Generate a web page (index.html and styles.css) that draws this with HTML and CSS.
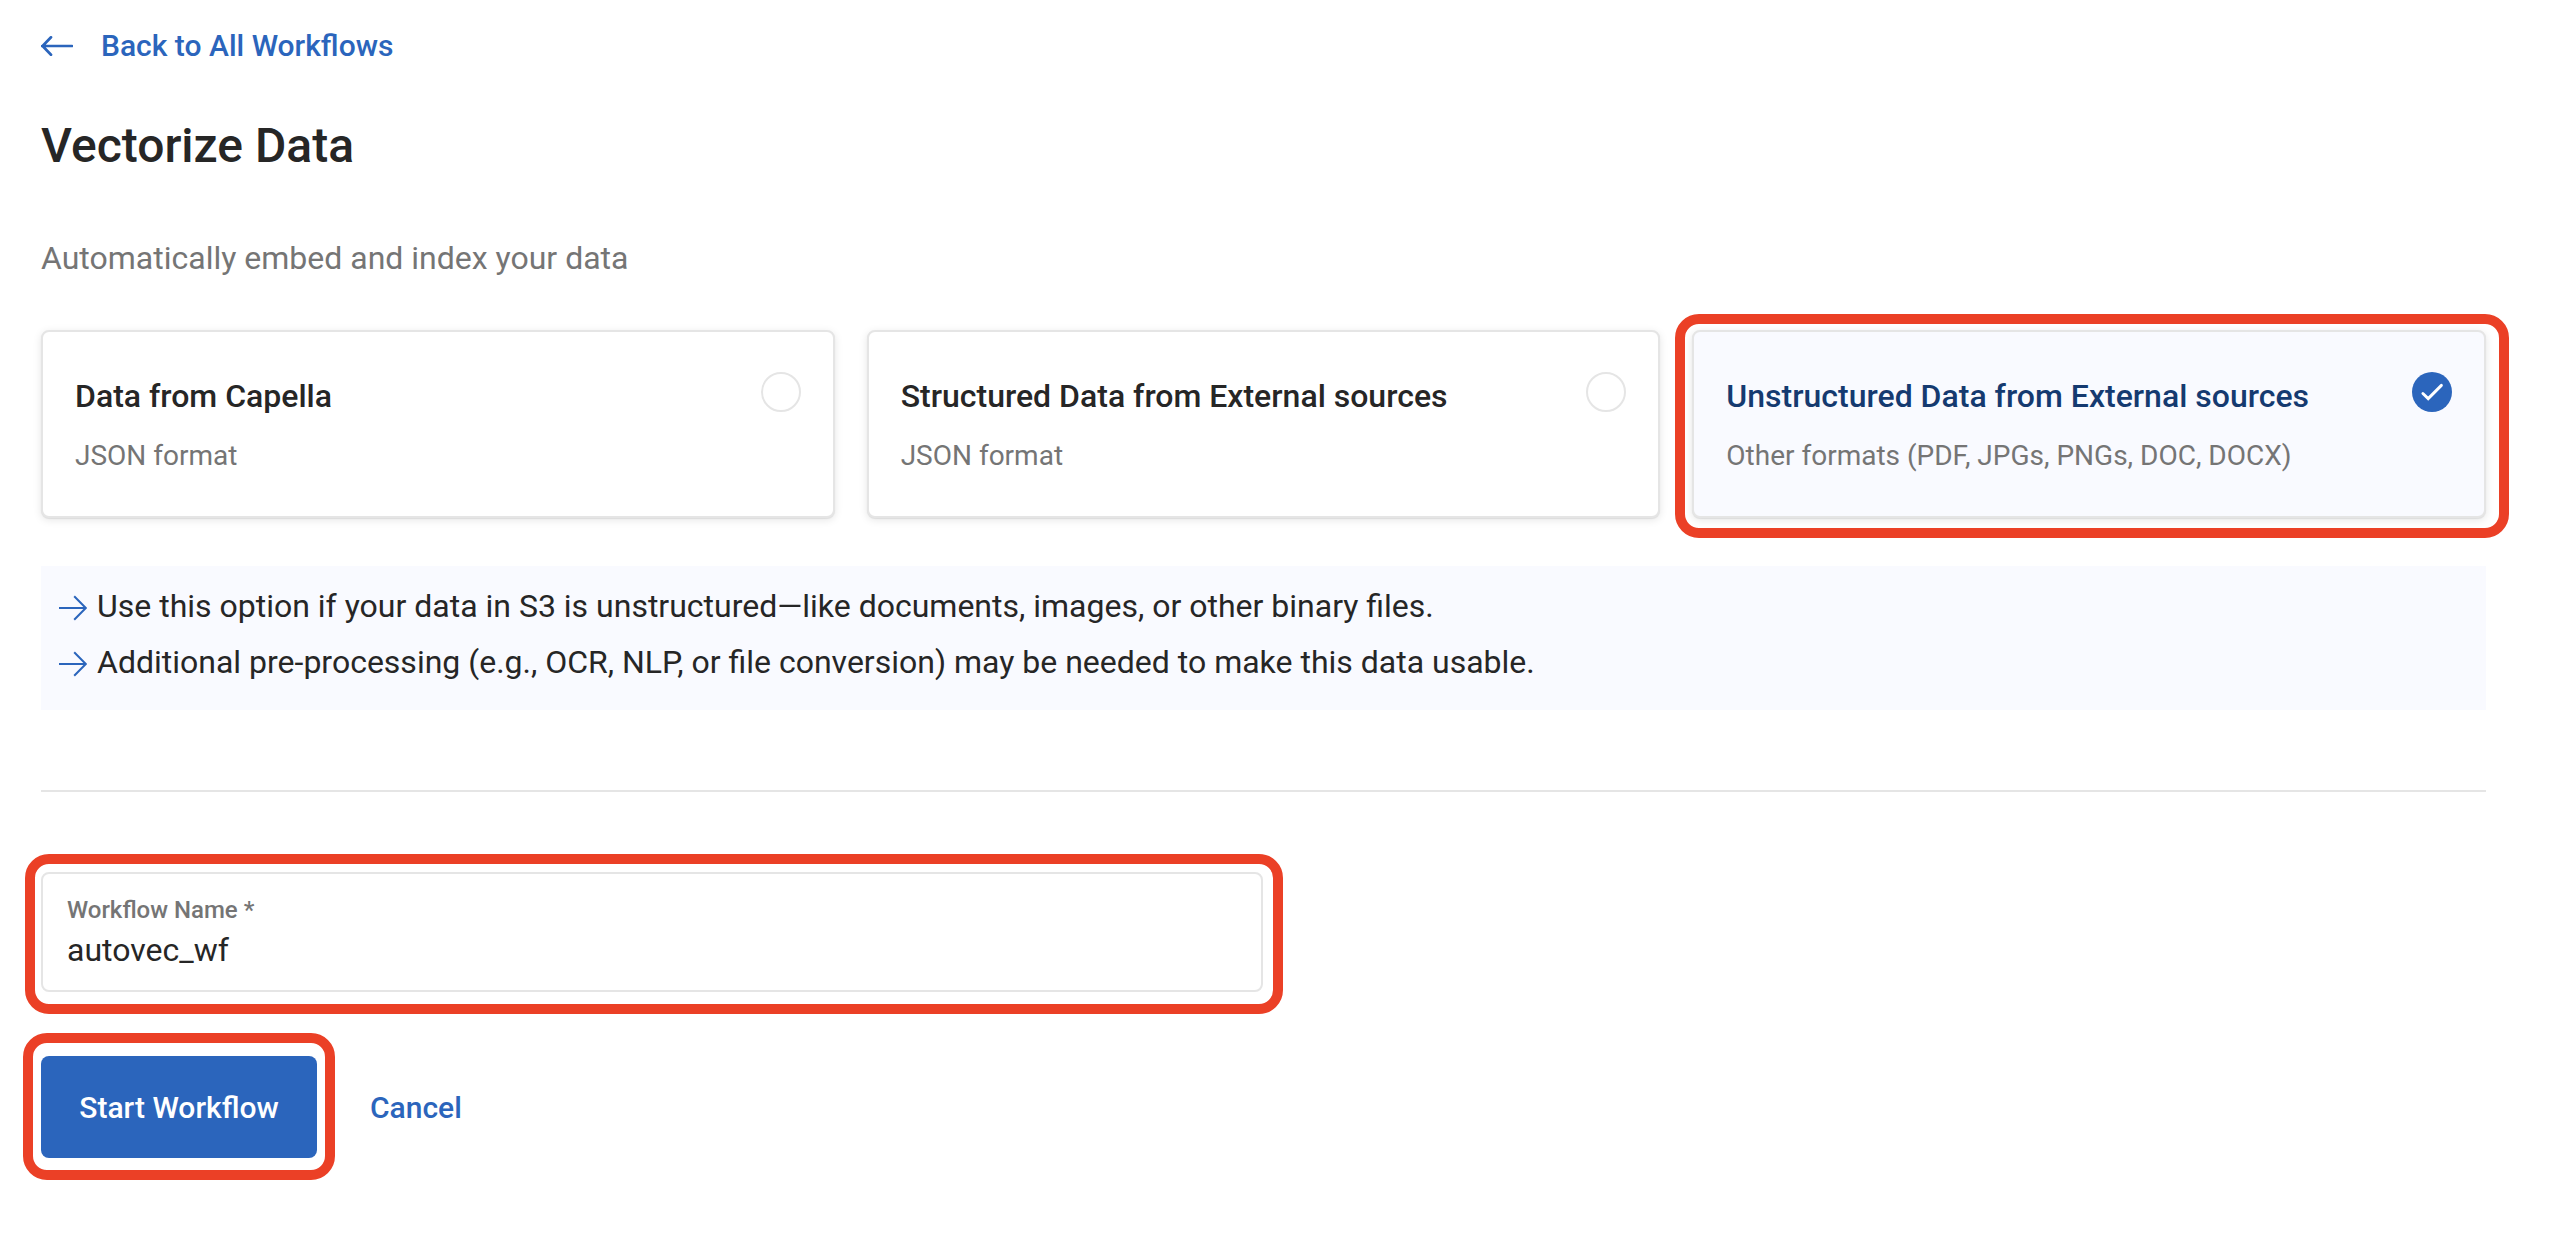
FILE: index.html
```
<!DOCTYPE html>
<html lang="en">
<head>
<meta charset="utf-8">
<title>Vectorize Data</title>
<link rel="stylesheet" href="styles.css">
</head>
<body>
<main class="page">
  <a class="back" href="#">
    <svg class="back-icon" width="32" height="20" viewBox="0 0 32 20" fill="none"><path d="M31 10H1M10 1.3 1.6 10l8.4 8.7" stroke="currentColor" stroke-width="2.7" stroke-linecap="round" stroke-linejoin="round"/></svg>
    <span>Back to All Workflows</span>
  </a>
  <h1 class="title">Vectorize Data</h1>
  <p class="subtitle">Automatically embed and index your data</p>

  <section class="cards">
    <article class="card">
      <div class="card-body">
        <h2 class="card-title">Data from Capella</h2>
        <p class="card-text">JSON format</p>
      </div>
      <span class="radio"></span>
    </article>
    <article class="card">
      <div class="card-body">
        <h2 class="card-title">Structured Data from External sources</h2>
        <p class="card-text">JSON format</p>
      </div>
      <span class="radio"></span>
    </article>
    <article class="card card-selected">
      <div class="card-body">
        <h2 class="card-title">Unstructured Data from External sources</h2>
        <p class="card-text">Other formats (PDF, JPGs, PNGs, DOC, DOCX)</p>
      </div>
      <svg class="check" width="40" height="40" viewBox="0 0 40 40" fill="none"><circle cx="20" cy="20" r="20" fill="#2b65bc"/><path d="M10.9 21.5 16.2 26.6 29.4 13.4" stroke="#fff" stroke-width="2.9" stroke-linecap="round" stroke-linejoin="miter"/></svg>
      <span class="ring ring-card"></span>
    </article>
  </section>

  <ul class="info">
    <li class="info-item"><svg class="info-icon" width="28" height="26" viewBox="0 0 28 26" fill="none"><path d="M0 13H26.5M15.2 1.2 26.8 13 15.2 24.8" stroke="currentColor" stroke-width="2"/></svg>Use this option if your data in S3 is unstructured—like documents, images, or other binary files.</li>
    <li class="info-item"><svg class="info-icon" width="28" height="26" viewBox="0 0 28 26" fill="none"><path d="M0 13H26.5M15.2 1.2 26.8 13 15.2 24.8" stroke="currentColor" stroke-width="2"/></svg>Additional pre-processing (e.g., OCR, NLP, or file conversion) may be needed to make this data usable.</li>
  </ul>

  <hr class="divider">

  <div class="field">
    <label class="field-label" for="workflow-name">Workflow Name *</label>
    <input class="field-input" id="workflow-name" type="text" value="autovec_wf" spellcheck="false">
    <span class="ring ring-field"></span>
  </div>

  <div class="actions">
    <div class="primary">
      <button class="button" type="button">Start Workflow</button>
      <span class="ring ring-button"></span>
    </div>
    <button class="cancel" type="button">Cancel</button>
  </div>
</main>
</body>
</html>
```
FILE: styles.css
```
* { box-sizing: border-box; }

body {
  margin: 0;
  background: #fff;
  color: #262626;
  font-family: Roboto, "Liberation Sans", sans-serif;
  font-size: 32px;
}

h1, h2, p, ul { margin: 0; padding: 0; }

.page {
  width: 2486px;
  min-height: 1242px;
  padding: 22px 0 0 41px;
  display: flex;
  flex-direction: column;
}

.back {
  display: flex;
  align-items: center;
  align-self: flex-start;
  gap: 28px;
  color: #2b65bc;
  font-size: 30px;
  font-weight: 500;
  line-height: 47px;
  text-decoration: none;
}

.back-icon { display: block; }

.title {
  margin-top: 48px;
  font-size: 48px;
  font-weight: 500;
  line-height: 57px;
}

.subtitle {
  margin-top: 60px;
  color: #757575;
  line-height: 48px;
}

.cards {
  display: grid;
  grid-template-columns: repeat(3, 1fr);
  gap: 32px;
  margin-top: 48px;
}

.card {
  position: relative;
  display: flex;
  justify-content: space-between;
  height: 188px;
  padding: 40px 32px;
  border: 2px solid #e5e5e5;
  border-radius: 8px;
  background: #fff;
  box-shadow: 0 1px 1px rgba(0, 0, 0, 0.08), 0 2px 8px rgba(0, 0, 0, 0.1);
}

.card-title {
  font-size: 32px;
  font-weight: 500;
  line-height: 48px;
}

.card-text {
  margin-top: 14px;
  color: #757575;
  font-size: 28px;
  line-height: 43px;
}

.card-selected { background: #f9faff; }
.card-selected .card-title { color: #153a70; }

.radio {
  width: 40px;
  height: 40px;
  border: 2px solid #e5e5e5;
  border-radius: 50%;
}

.info {
  height: 144px;
  margin-top: 48px;
  padding: 12px 18px;
  background: #f9faff;
  list-style: none;
}

.info-item {
  display: flex;
  align-items: center;
  gap: 10px;
  line-height: 56px;
}

.info-icon {
  margin-top: 4px;
  color: #2b65bc;
}

.divider {
  width: 100%;
  height: 2px;
  margin: 80px 0;
  border: 0;
  background: #e5e5e5;
}

.field {
  position: relative;
  display: flex;
  flex-direction: column;
  gap: 5px;
  width: 1222px;
  height: 120px;
  padding: 21px 24px 0;
  border: 2px solid #e5e5e5;
  border-radius: 8px;
}

.field-label {
  color: #757575;
  font-size: 24px;
  font-weight: 500;
  line-height: 30px;
}

.field-input {
  height: 40px;
  padding: 0;
  border: 0;
  outline: 0;
  background: transparent;
  color: #262626;
  font: 400 32px/40px Roboto, "Liberation Sans", sans-serif;
}

.actions {
  display: flex;
  align-items: center;
  gap: 53px;
  margin-top: 64px;
}

.primary { position: relative; }

.button {
  display: block;
  width: 276px;
  height: 102px;
  padding: 2px 0 0;
  border: 0;
  border-radius: 8px;
  background: #2b65bc;
  color: #fff;
  font: 500 30px/48px Roboto, "Liberation Sans", sans-serif;
}

.cancel {
  padding: 2px 0 0;
  border: 0;
  background: none;
  color: #2b65bc;
  font: 500 30px/48px Roboto, "Liberation Sans", sans-serif;
}

/* Highlight outlines drawn over the elements they surround */
.ring {
  position: absolute;
  border: 10px solid #eb4026;
  border-radius: 24px;
  pointer-events: none;
}

.ring-card { inset: -18px -25px -22px -19px; }
.ring-field { inset: -20px -22px -24px -18px; }
.ring-button { inset: -23px -18px -22px -18px; }
```
